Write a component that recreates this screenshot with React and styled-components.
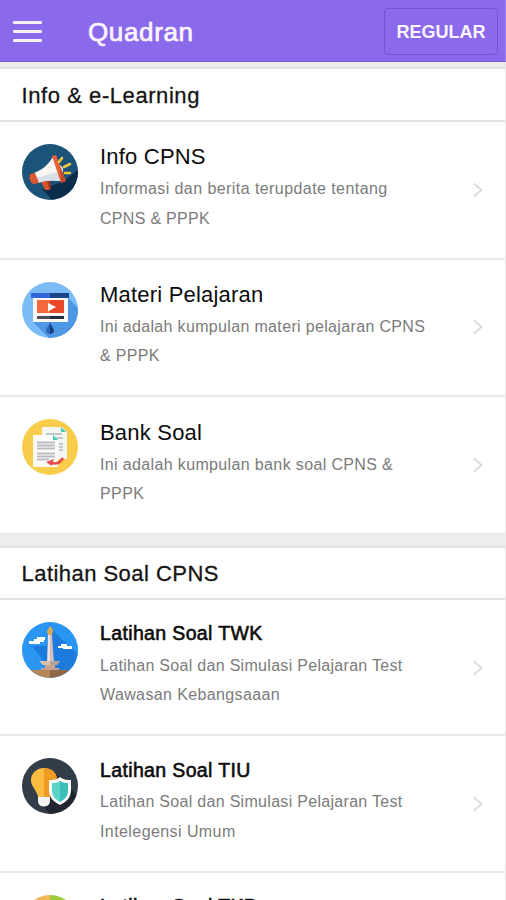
import React from 'react'
import styled, { createGlobalStyle } from 'styled-components'

const GlobalStyle = createGlobalStyle`
  * {
    box-sizing: border-box;
  }
  body {
    margin: 0;
    background: #fff;
    font-family: 'Liberation Sans', Arial, sans-serif;
  }
`

// icons
const MegaphoneIcon = () => (
  <Icon viewBox="0 0 56 56">
    <clipPath id="mega">
      <circle cx="28" cy="28" r="28" />
    </clipPath>
    <g clipPath="url(#mega)">
      <rect width="56" height="56" fill="#1c5378" />
      <path d="M42 37L56 26V60H34L20 45Z" fill="#0c2c4b" />
      <path d="M19 37l8-2 1 11h-5z" fill="#d9532f" />
      <path d="M25 36l3-1 1 10-2 1z" fill="#a83520" />
      <path d="M37 21c4 0 6 7 2 9z" fill="#dce3e9" />
      <path d="M12 29c8-3 14-8 19-16l8 24c-8-1-16-1-23 2z" fill="#f8f6f5" />
      <path d="M14 34l22-6 3 9c-8-1-16-1-23 2z" fill="#d9dfe6" />
      <path d="M8 30l5-1 4 10-6 1c-3-2-4-6-3-10z" fill="#df5631" />
      <path d="M30 12l4-1 10 26-5 2z" fill="#e7623a" />
      <path d="M38 23l6 14-5 2z" fill="#c5472c" />
      <g stroke="#e9c83e" strokeWidth="2.6" strokeLinecap="round">
        <path d="M37 18l3-4M42 23l6-3M43 29h5" />
      </g>
    </g>
  </Icon>
)

const PresentationIcon = () => (
  <Icon viewBox="0 0 56 56">
    <clipPath id="pres">
      <circle cx="28" cy="28" r="28" />
    </clipPath>
    <g clipPath="url(#pres)">
      <rect width="56" height="56" fill="#7bbcf6" />
      <path d="M11 40h35V16L60 30v30H31z" fill="#4d97e5" />
      <rect x="11" y="14" width="35" height="26" fill="#fbf8f8" />
      <rect x="9" y="11" width="19" height="5" fill="#2f65d8" />
      <rect x="28" y="11" width="19" height="5" fill="#1a458b" />
      <rect x="15" y="18" width="14" height="13" fill="#f3683d" />
      <rect x="28" y="18" width="14" height="13" fill="#e8472a" />
      <path d="M26 21l8 4-8 4.500z" fill="#fff" />
      <rect x="15" y="34" width="27" height="3" fill="#4b4f5b" />
      <path d="M28 34h14v3H28z" fill="#252e40" />
      <path d="M28 40c-1 4-4 6-4 9 0 2 2 3 4 3z" fill="#2b66bd" />
      <path d="M28 40c1 4 4 6 4 9 0 2-2 3-4 3z" fill="#173f80" />
    </g>
  </Icon>
)

const PapersIcon = () => (
  <Icon viewBox="0 0 56 56">
    <circle cx="28" cy="28" r="28" fill="#f8cd4b" />
    <path d="M20 8h20l5 5v27H20z" fill="#f3f6f4" />
    <path d="M39 8l5 5h-5z" fill="#45cbb5" />
    <path
      d="M24 15h16M32 19h9M37 25h4M37 28h4M37 31h4"
      stroke="#c2c8c7"
      strokeWidth="1.800"
    />
    <path d="M11 16h20l5 5v27H11z" fill="#fcfcfb" />
    <path d="M31 16l5 5h-5z" fill="#45cbb5" />
    <path
      d="M15 23.500h18M15 26.500h18M15 29.500h18M15 34.500h18M15 37.500h18M15 40.500h12"
      stroke="#b9bcc0"
      strokeWidth="2.200"
    />
    <path d="M27 43c6 3 11 1 14-4" fill="none" stroke="#e54b50" strokeWidth="2.500" />
    <path d="M24 43l8-3-2 7z" fill="#e54b50" />
  </Icon>
)

const MonasIcon = () => (
  <Icon viewBox="0 0 56 56">
    <clipPath id="monas">
      <circle cx="28" cy="28" r="28" />
    </clipPath>
    <g clipPath="url(#monas)">
      <rect width="56" height="56" fill="#2a95f2" />
      <path d="M29 7l27 25v18H30L10 24h14z" fill="#1d7bdd" />
      <path d="M7 19h5v-2h3v-2h8v3h-1v2h-4v2H7zM36 24h3v-2h6v2h5v3h-9v-1h-5z" fill="#fff" />
      <path d="M26 13h3l2 28h-6z" fill="#eee1dc" />
      <path d="M28 13h2l2 28h-4z" fill="#cdbfc2" />
      <path d="M28 4l3 4-1 5h-4l-1-4z" fill="#dba951" />
      <path d="M17 39h21l-3 4H21z" fill="#dcc0ae" />
      <path d="M28 39h10l-3 4h-7z" fill="#b8a097" />
      <path d="M23 43h10v4H23z" fill="#cda78d" />
      <path d="M0 48h28v8H0z" fill="#b38658" />
      <path d="M28 48h28v8H28z" fill="#8f6947" />
      <path d="M19 46h18v2H19z" fill="#c5a18c" />
    </g>
  </Icon>
)

const BulbIcon = () => (
  <Icon viewBox="0 0 56 56">
    <clipPath id="bulb">
      <circle cx="28" cy="28" r="28" />
    </clipPath>
    <g clipPath="url(#bulb)">
      <rect width="56" height="56" fill="#333d49" />
      <path d="M33 15L56 38v18H28l-10-12z" fill="#202630" />
      <path d="M22 10C14 10 9 16 9 22c0 7 6 10 7 17h12c1-7 7-10 7-17 0-7-5-12-13-12z" fill="#f8bd40" />
      <path d="M22 10v29h6c1-7 7-10 7-17 0-7-5-12-13-12z" fill="#f09a24" />
      <path d="M16 39h12v5c-1 6-11 6-12 0z" fill="#f5f4f3" />
      <path d="M38 19c4 3 7 3 11 3v10c0 8-5 12-11 15-6-3-11-7-11-15V22c4 0 7 0 11-3z" fill="#fbfbfa" />
      <path d="M38 23c3 2 5 2 8 2v7c0 6-3 9-8 12-5-3-8-6-8-12v-7c3 0 5 0 8-2z" fill="#5bd3cb" />
      <path d="M38 23c3 2 5 2 8 2v7c0 6-3 9-8 12z" fill="#3fbdb8" />
    </g>
  </Icon>
)

const SplitIcon = () => (
  <Icon viewBox="0 0 56 56">
    <path d="M28 0a28 28 0 0 0 0 56z" fill="#f6b852" />
    <path d="M28 0a28 28 0 0 1 0 56z" fill="#9ccc3c" />
  </Icon>
)

const Chevron = () => (
  <Arrow viewBox="0 0 10 16">
    <path d="M1 1.500l7.500 6.500L1 14.500" />
  </Arrow>
)

const infoItems = [
  {
    icon: MegaphoneIcon,
    title: 'Info CPNS',
    lines: [
      { text: 'Informasi dan berita terupdate tentang', spacing: 0.43 },
      { text: 'CPNS & PPPK', spacing: 0.3 }
    ]
  },
  {
    icon: PresentationIcon,
    title: 'Materi Pelajaran',
    lines: [
      { text: 'Ini adalah kumpulan materi pelajaran CPNS', spacing: 0.34 },
      { text: '& PPPK', spacing: 0.3 }
    ]
  },
  {
    icon: PapersIcon,
    title: 'Bank Soal',
    lines: [
      { text: 'Ini adalah kumpulan bank soal CPNS &', spacing: 0.36 },
      { text: 'PPPK', spacing: 0.4 }
    ]
  }
]

const exerciseItems = [
  {
    icon: MonasIcon,
    title: 'Latihan Soal TWK',
    lines: [
      { text: 'Latihan Soal dan Simulasi Pelajaran Test', spacing: 0.3 },
      { text: 'Wawasan Kebangsaaan', spacing: 0.38 }
    ]
  },
  {
    icon: BulbIcon,
    title: 'Latihan Soal TIU',
    lines: [
      { text: 'Latihan Soal dan Simulasi Pelajaran Test', spacing: 0.3 },
      { text: 'Intelegensi Umum', spacing: 0.42 }
    ]
  },
  {
    icon: SplitIcon,
    title: 'Latihan Soal TKP',
    lines: []
  }
]

const Item = ({ item, compact }) => {
  const ItemIcon = item.icon
  return (
    <Row $compact={compact}>
      <ItemIcon />
      <Texts>
        <Title $compact={compact}>{item.title}</Title>
        {item.lines.map(line => (
          <Line key={line.text} $spacing={line.spacing}>
            {line.text}
          </Line>
        ))}
      </Texts>
      <Chevron />
    </Row>
  )
}

const App = () => {
  return (
    <Screen>
      <GlobalStyle />
      <Header>
        <MenuButton aria-label="Menu">
          <Bar />
          <Bar />
          <Bar />
        </MenuButton>
        <AppName>Quadran</AppName>
        <PlanButton>REGULAR</PlanButton>
      </Header>
      <Content>
        <Section>
          <Heading $height={53} $spacing="0.57px">
            Info &amp; e-Learning
          </Heading>
          {infoItems.map(item => (
            <Item key={item.title} item={item} />
          ))}
        </Section>
        <Section>
          <Heading $height={52} $spacing="0.46px">
            Latihan Soal CPNS
          </Heading>
          {exerciseItems.map(item => (
            <Item key={item.title} item={item} compact />
          ))}
        </Section>
      </Content>
    </Screen>
  )
}

const Screen = styled.div`
  width: 506px;
  height: 900px;
  display: flex;
  flex-direction: column;
  overflow: hidden;
  background: #eeedee;
`

const Header = styled.header`
  flex: none;
  height: 62px;
  display: flex;
  align-items: center;
  padding: 0 7px 0 13px;
  background: #8a69ea;
  border-bottom: 1px solid #7c5bdc;
  border-right: 1px solid #9c82ea;
`

const MenuButton = styled.button`
  width: 29px;
  padding: 0;
  border: 0;
  background: none;
  display: flex;
  flex-direction: column;
  gap: 6px;
  margin-top: 2px;
`

const Bar = styled.span`
  height: 3px;
  border-radius: 1px;
  background: #f6f0ff;
`

const AppName = styled.h1`
  flex: 1;
  margin: 3px 0 0 46px;
  font-size: 26px;
  line-height: 30px;
  font-weight: 400;
  letter-spacing: 0.65px;
  color: #faf5ff;
  -webkit-text-stroke: 0.7px #faf5ff;
`

const PlanButton = styled.button`
  width: 114px;
  height: 47px;
  padding: 2px 0 0;
  margin-top: 1px;
  border: 1px solid #7652dc;
  border-radius: 4px;
  background: transparent;
  font-family: inherit;
  font-size: 18px;
  font-weight: 700;
  color: #faf5ff;
`

const Content = styled.main`
  padding-top: 5px;
  display: flex;
  flex-direction: column;
  gap: 11.2px;
`

const Section = styled.section`
  background: #fff;
  border-top: 2px solid #e2e1e1;
  border-right: 1px solid #e9e9e9;
`

const Heading = styled.h2`
  height: ${p => p.$height}px;
  margin: 0;
  padding-left: 21.5px;
  border-bottom: 2px solid #e3e3e3;
  font-size: 22px;
  line-height: ${p => p.$height}px;
  font-weight: 400;
  letter-spacing: ${p => p.$spacing};
  color: #151515;
  -webkit-text-stroke: 0.3px #151515;
`

const Row = styled.div`
  height: ${p => (p.$compact ? '136.4px' : '137.6px')};
  display: flex;
  align-items: flex-start;
  padding: 22px 22px 0 22px;
  border-bottom: 2px solid #e8e8e8;
`

const Icon = styled.svg`
  flex: none;
  width: 56px;
  height: 56px;
`

const Texts = styled.div`
  flex: 1;
  margin-left: 22px;
  white-space: nowrap;
`

const Title = styled.h3`
  margin: ${p => (p.$compact ? '-1.8px 0 4.8px' : '0.4px 0 4px')};
  font-size: ${p => (p.$compact ? '19.5px' : '22px')};
  line-height: 26px;
  font-weight: 400;
  letter-spacing: ${p => (p.$compact ? '0.36px' : '0.2px')};
  color: #0c0c0c;
  ${p => p.$compact && '-webkit-text-stroke: 0.6px #0c0c0c;'}
`

const Line = styled.div`
  font-size: 16px;
  line-height: 29.5px;
  letter-spacing: ${p => p.$spacing}px;
  color: #7b7b7b;
`

const Arrow = styled.svg`
  flex: none;
  width: 10px;
  height: 16px;
  margin-top: 37.6px;
  fill: none;
  stroke: #dadada;
  stroke-width: 1.8;
`

export default App
